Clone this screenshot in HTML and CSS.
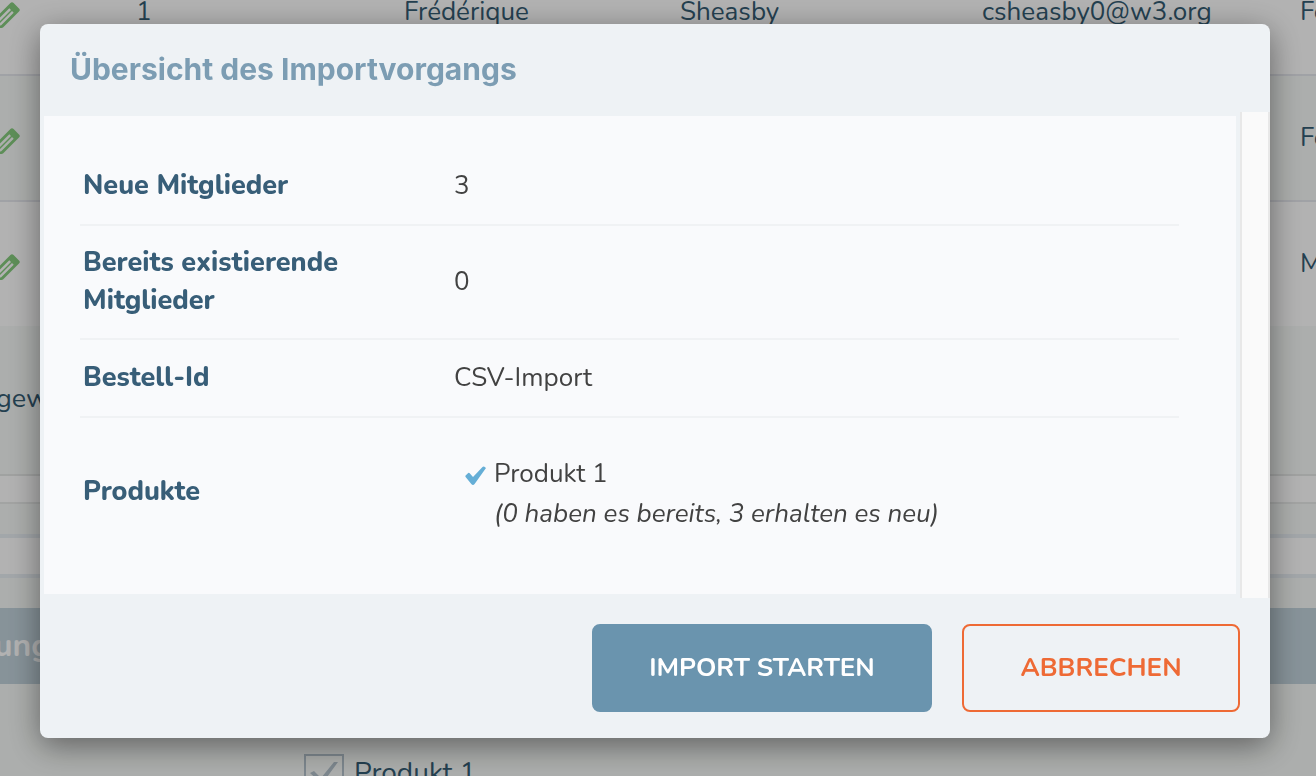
FILE: index.html
```html
<!DOCTYPE html>
<html lang="de">
<head>
<meta charset="utf-8">
<meta name="viewport" content="width=device-width, initial-scale=1">
<title>Übersicht des Importvorgangs</title>
<link rel="stylesheet" href="styles.css">
</head>
<body>
<svg class="defs" aria-hidden="true">
  <symbol id="pencil" viewBox="0 0 26 26">
    <path fill-rule="evenodd" d="M16.4 1Q18 -.6 19.6 1L25 6.4Q26.6 8 25 9.6L9 25.6Q8.400 26 7.500 26H0V18Q0 17.400.6 16.800ZM15.300 6.300L2.300 19.300L4 21L17 8ZM18 9L5 22L6.700 23.700L19.700 10.700Z"/>
  </symbol>
</svg>

<main class="page">
  <table class="members">
    <colgroup><col class="c-edit"><col class="c-no"><col class="c-first"><col class="c-last"><col class="c-mail"><col></colgroup>
    <tbody>
      <tr class="first"><td><svg class="pencil"><use href="#pencil"/></svg></td><td>1</td><td>Frédérique</td><td>Sheasby</td><td>csheasby0@w3.org</td><td>Female</td></tr>
      <tr><td><svg class="pencil"><use href="#pencil"/></svg></td><td></td><td></td><td></td><td></td><td>Female</td></tr>
      <tr><td><svg class="pencil"><use href="#pencil"/></svg></td><td></td><td></td><td></td><td></td><td>Male</td></tr>
    </tbody>
  </table>
  <p class="note">gewählt</p>
  <div class="strip strip-top"></div>
  <div class="strip strip-bottom"></div>
  <h2 class="section-title">ung</h2>
  <label class="option"><input type="checkbox" checked>Produkt 1</label>
</main>

<div class="backdrop">
  <section class="modal" role="dialog" aria-modal="true" aria-labelledby="modal-title">
    <h1 class="modal-title" id="modal-title">Übersicht des Importvorgangs</h1>
    <div class="modal-body">
      <div class="panel">
        <table class="summary">
          <tbody>
            <tr><th scope="row">Neue Mitglieder</th><td>3</td></tr>
            <tr><th scope="row">Bereits existierende Mitglieder</th><td>0</td></tr>
            <tr><th scope="row">Bestell-Id</th><td>CSV-Import</td></tr>
            <tr>
              <th scope="row">Produkte</th>
              <td>
                <ul class="products">
                  <li>
                    <svg class="check" viewBox="0 0 22 20" aria-hidden="true"><path d="M.6 9.500L3.200 7Q4 6.500 4.700 7.200L8 11L17.500 1Q18.400 0 19.400.8L21 2L9.600 18Q8 20 6.300 18L.6 11Q0 10.200.6 9.500Z"/></svg>
                    <div>Produkt 1<br><em>(0 haben es bereits, 3 erhalten es neu)</em></div>
                  </li>
                </ul>
              </td>
            </tr>
          </tbody>
        </table>
      </div>
      <div class="gutter"></div>
    </div>
    <footer class="actions">
      <button type="button" class="btn btn-primary">IMPORT STARTEN</button>
      <button type="button" class="btn btn-cancel">ABBRECHEN</button>
    </footer>
  </section>
</div>
</body>
</html>
```

FILE: styles.css
```css
* { box-sizing: border-box; }

body {
  margin: 0;
  overflow: hidden;
  height: 100vh;
  background: #f7faf8;
  color: #345c73;
  font: 27px/38px Nunito, Lato, "Open Sans", sans-serif;
}

.defs { display: none; }

.page { overflow: hidden; }

.members {
  width: 1500px;
  table-layout: fixed;
  border-collapse: separate;
  border-spacing: 0;
  background: #fff;
  font-size: 26px;
}
.members td {
  height: 126px;
  padding: 0;
  border-bottom: 2px solid #e6e8ee;
}
.members .first td {
  height: 76px;
  padding-bottom: 46px;
  line-height: 24px;
  vertical-align: top;
}
.members tr:nth-child(even) { background: #f7faf8; }
.members tr:last-child td { height: 124px; border-bottom: 0; }
.c-edit { width: 136px; }
.c-no { width: 268px; }
.c-first { width: 276px; }
.c-last { width: 302px; }
.c-mail { width: 318px; }

.pencil {
  display: block;
  width: 26px;
  height: 26px;
  margin-left: -6px;
  margin-top: 6px;
  fill: #86cc7e;
}
.first .pencil { margin-top: 2px; }

.note {
  margin: 0;
  padding: 54px 0 56px;
  border-bottom: 2px solid #e6e8e7;
  text-indent: -4px;
}

.strip { background: #fff; }
.strip-top { height: 28px; border-bottom: 2px solid #e9ebea; }
.strip-bottom {
  height: 44px;
  margin: 30px 0;
  border: solid #e9eff4;
  border-width: 4px 0;
}

.section-title {
  margin: 0 0 70px;
  padding: 19px 0;
  background: #c2d3dc;
  color: #fff;
  font: bold 32px/38px Nunito, Lato, sans-serif;
  text-indent: -6px;
}

.option { display: flex; gap: 10px; margin-left: 304px; font-size: 28px; }
.option input {
  appearance: none;
  width: 40px;
  height: 40px;
  margin: 0;
  border: 2px solid #b4c2cc;
}
.option input::after {
  content: "";
  display: block;
  height: 36px;
  background: #b4c2cc;
  clip-path: polygon(28px 6px, 32px 6px, 16px 28px, 4px 17px, 8px 15px, 15px 22px);
}

.backdrop {
  position: fixed;
  inset: 0;
  padding: 24px 46px 0 40px;
  background: rgba(0, 0, 0, .3);
}

.modal {
  overflow: hidden;
  border-radius: 8px;
  background: #eef2f5;
  box-shadow: 0 8px 32px rgba(0, 0, 0, .45);
}

.modal-title {
  margin: 0;
  padding: 26px 30px 24px;
  color: #7c9db3;
  font: bold 30px/38px Inter, sans-serif;
}

.modal-body { display: flex; }

.panel {
  flex: 1;
  padding: 32px 57px 32px 36px;
  border: 4px solid #eef2f5;
  background: #f9fafc;
}

.gutter {
  width: 30px;
  border: solid #e8e8e8;
  border-width: 0 2px;
  background: #fafafa;
}

.summary {
  width: 100%;
  table-layout: fixed;
  border-collapse: separate;
  border-spacing: 0;
}
.summary th,
.summary td {
  height: 78px;
  padding: 18px 3px;
  border-bottom: 2px solid #f0f2f4;
  vertical-align: middle;
}
.summary th {
  width: 371px;
  padding-right: 80px;
  color: #385e78;
  font-weight: 800;
  text-align: left;
}
.summary td { color: #424242; font-size: 26px; }
.summary tr:last-child > * { padding-block: 32px 28px; border-bottom: 0; }

.products { margin: 0; padding: 4px 0 0 11px; list-style: none; line-height: 40px; }
.products li { display: flex; gap: 7px; }
.check { flex: none; width: 22px; height: 20px; margin-top: 12px; fill: #65aed6; }

.actions {
  display: flex;
  justify-content: flex-end;
  gap: 30px;
  padding: 26px 30px;
}
.btn {
  height: 88px;
  padding: 0 54px;
  border: 2px solid;
  border-radius: 8px;
  font: bold 26px/38px Nunito, Lato, sans-serif;
}
.btn-primary { min-width: 340px; border-color: #6a94ae; background: #6a94ae; color: #fff; }
.btn-cancel { min-width: 278px; border-color: #ee6a35; background: transparent; color: #ee6a35; }
```
